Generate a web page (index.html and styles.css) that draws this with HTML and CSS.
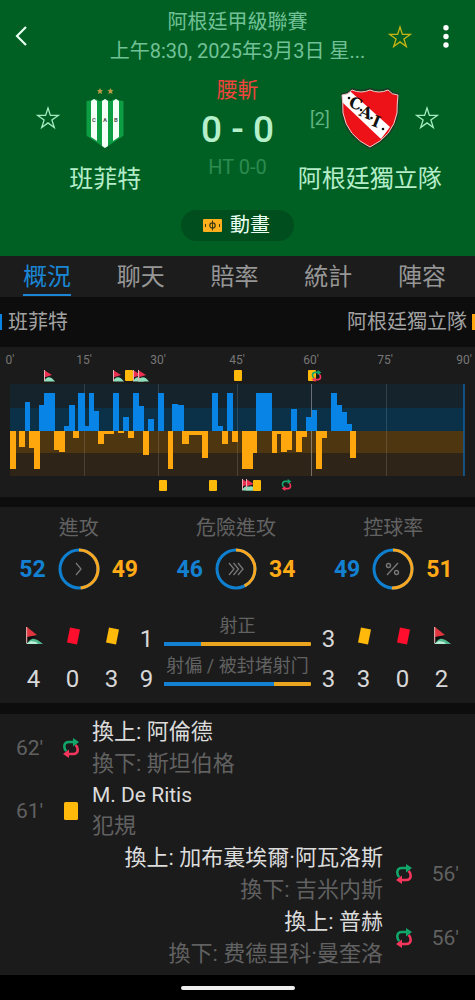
FILE: index.html
```
<!DOCTYPE html>
<html lang="zh-Hant">
<head>
<meta charset="utf-8">
<meta name="viewport" content="width=device-width, initial-scale=1">
<title>班菲特 - 阿根廷獨立隊</title>
<link rel="stylesheet" href="styles.css">
</head>
<body>
<svg class="defs" aria-hidden="true">
  <symbol id="star" viewBox="0 0 24 24"><path d="M12 2l2.4 7.4h7.8l-6.3 4.6 2.4 7.5-6.3-4.6-6.3 4.6 2.4-7.5-6.3-4.6h7.8z" fill="none" stroke="currentColor" stroke-width="1.3"/></symbol>
  <symbol id="corner" viewBox="0 0 18 18"><path d="M1 17c2-1 3-4 6-5 3-1 7 2 11 5z" fill="#52b98d"/><path d="M1 17l5-3 5 1 2 2z" fill="#b9f0d8"/><path d="M3 9l9 1-4 1-5 2z" fill="#0c0c0c"/><path d="M2 0l10 8-10 2z" fill="#e0353f"/><path d="M1 0h1.200v16h-1.200z" fill="#d8a0a0"/></symbol>
  <symbol id="flag" viewBox="0 0 11 12"><path d="M0 11.500c3-6 7-5 11 0z" fill="#8fe0bd"/><path d="M0 0l8 5-8 2.500z" fill="#ee3050"/><path d="M0 0h1v11h-1z" fill="#eab0b8"/></symbol>
  <symbol id="redcard" viewBox="0 0 16 20"><path d="M5 1.500l10 2-3 15-10-2z" fill="#ff0f2d"/></symbol>
  <symbol id="yellowcard" viewBox="0 0 16 20"><path d="M5 1.500l10 2-3 15-10-2z" fill="#ffb90a"/></symbol>
  <symbol id="swap" viewBox="0 0 18 20"><g fill="none" stroke-width="2.6"><path d="M4.500 13Q2.300 11.500 2.300 8.500 2.300 4 7 4h5" stroke="#12a66a"/><path d="M13.500 7q2.200 1.500 2.200 4.500Q15.700 16 11 16H6" stroke="#f5365c"/></g><path d="M11 0l6 4-6 4.500z" fill="#12a66a"/><path d="M7 11.500v8.500l-6-4z" fill="#f5365c"/></symbol>
</svg>

<header class="header">
  <div class="topbar">
    <button class="icon-button" aria-label="返回"><svg width="14" height="22" viewBox="0 0 14 22"><path d="M11 1L2 10l9 9" fill="none" stroke="#e4fff0" stroke-width="2.2"/></svg></button>
    <h1 class="league"><span>阿根廷甲級聯賽</span><span class="date">上午8:30, 2025年3月3日 星...</span></h1>
    <div class="actions">
      <button class="icon-button gold" aria-label="收藏"><svg width="24" height="24"><use href="#star"/></svg></button>
      <button class="icon-button" aria-label="更多"><svg width="6" height="24" viewBox="0 0 6 24"><g fill="#fff"><circle cx="3" cy="2.800" r="2.700"/><circle cx="3" cy="11.500" r="2.700"/><circle cx="3" cy="20" r="2.700"/></g></svg></button>
    </div>
  </div>
  <div class="match">
    <section class="team">
      <div class="crest-row">
        <button class="icon-button mint before" aria-label="收藏班菲特"><svg width="24" height="24"><use href="#star"/></svg></button>
        <svg class="crest" viewBox="0 0 58 68" role="img" aria-label="班菲特隊徽">
          <g fill="#b79a45"><path d="M24 4l1 2h2l-1.500 1.500.5 2.500-2-1-2 1 .5-2.500L21 6h2zM34.500 4l1 2h2l-1.500 1.500.5 2.500-2-1-2 1 .5-2.500L31.500 6h2z"/></g>
          <path d="M10.500 17q4 0 7.500-2 3 0 5 2 3 0 6-2 3 2 6 2 2-2 5-2 3 2 7.500 2v34q0 1-2 2L29 64 12.500 53q-2-1-2-2z" fill="#0d9d43"/>
          <g fill="#f4fff7"><path d="M15 17l3-2 3 2v40l-6-4zM26 17l3-2 3 2v45l-3 2-3-2zM37 17l3-2 3 2v36l-6 4z"/></g>
          <g class="crest-letters"><text x="18" y="38">C</text><text x="29" y="38">A</text><text x="40" y="38">B</text></g>
        </svg>
      </div>
      <h2 class="team-name">班菲特</h2>
    </section>
    <div class="result">
      <span class="status">腰斬</span>
      <strong class="score">0 - 0</strong>
      <span class="half">HT 0-0</span>
    </div>
    <section class="team">
      <div class="crest-row">
        <span class="rank before">[2]</span>
        <svg class="crest" viewBox="0 0 58 68" role="img" aria-label="阿根廷獨立隊隊徽">
          <defs><clipPath id="shield"><path d="M1 11q6 0 10-5 9 4 18 0 9 4 18 0 4 5 10 5-1 9-1 18Q52 52 29 63 6 52 2 29 2 20 1 11z"/></clipPath></defs>
          <g clip-path="url(#shield)"><path d="M0 0h58v68H0z" fill="#ed1118"/><path d="M-2 0h3l9 8 39 35-9 12L-1 16z" fill="#fff"/></g>
          <path d="M0 10q7 0 11-5.500 9 4 18 0 9 4 18 0 4 5.500 11 5.500-1 10-1 19Q53 53 29 64 5 53 1 29 1 20 0 10z" fill="none" stroke="#1c3a25" stroke-width="1.500"/>
          <path d="M1 11q6 0 10-5 9 4 18 0 9 4 18 0 4 5 10 5-1 9-1 18Q52 52 29 63 6 52 2 29 2 20 1 11z" fill="none" stroke="#f7c9c9"/>
          <g fill="#101010"><circle cx="8" cy="14" r="1.300"/><circle cx="20" cy="26" r="1.300"/><circle cx="30.500" cy="34" r="1.300"/><circle cx="42" cy="45" r="1.300"/></g>
          <g class="shield-letters"><text x="14.500" y="25" transform="rotate(22 14.500 20)">C</text><text x="25" y="34" transform="rotate(22 25 29)">A</text><text x="35" y="43" transform="rotate(22 35 38)">I</text></g>
        </svg>
        <button class="icon-button mint after" aria-label="收藏阿根廷獨立隊"><svg width="24" height="24"><use href="#star"/></svg></button>
      </div>
      <h2 class="team-name">阿根廷獨立隊</h2>
    </section>
  </div>
  <button class="animation"><svg width="19" height="13" viewBox="0 0 19 13"><rect width="19" height="13" rx="1" fill="#ffb01c"/><g fill="none" stroke="#3d3a12"><circle cx="9.500" cy="6.500" r="2.700" stroke-width="1.200"/><path d="M9.500 1.500v10M2.500 5v3M16.500 5v3"/></g></svg>動畫</button>
</header>

<nav class="tabs">
  <a class="active" href="#overview" aria-current="page">概況</a><a href="#chat">聊天</a><a href="#odds">賠率</a><a href="#stats">統計</a><a href="#lineup">陣容</a>
</nav>

<main id="overview">
  <div class="legend"><span class="home">班菲特</span><span class="away">阿根廷獨立隊</span></div>

  <svg class="momentum" viewBox="0 0 475 150" role="img" aria-label="比賽走勢">
    <g class="axis"><text x="10" y="17">0'</text><text x="84" y="17">15'</text><text x="158" y="17">30'</text><text x="237" y="17">45'</text><text x="311" y="17">60'</text><text x="385" y="17">75'</text><text x="464" y="17">90'</text></g>
    <path d="M10 37h454v24H10z" fill="#15232c"/><path d="M10 61h454v23H10z" fill="#0b3149"/>
    <path d="M10 84h454v22H10z" fill="#4d3610"/><path d="M10 106h454v23H10z" fill="#2e2518"/>
    <path d="M84.500 37v92M158.500 37v92M237.500 37v92M386.500 37v92" stroke="#fff" stroke-opacity=".13"/>
    <path d="M311.500 37v92" stroke="#fff" stroke-opacity=".35"/>
    <path d="M464 37v92" stroke="#1262a0" stroke-width="1.500"/>
    <path fill="#0883e6" d="M25 84v-29h5v29zM39 84v-26h5v26zM44 84v-38h11v38zM64 84v-5h5v5zM69 84v-26h6v26zM78 84v-38h7v38zM84 84v-5h5v5zM89 84v-38h5v38zM94 84v-20h5v20zM113 84v-38h6v38zM123 84v-14h6v14zM133 84v-38h6v38zM139 84v-25h5v25zM148 84v-12h6v12zM158 84v-38h6v38zM172 84v-27h6v27zM178 84v-26h6v26zM212 84v-38h6v38zM218 84v-5h5v5zM227 84v-38h6v38zM256 84v-38h16v38zM291 84v-22h6v22zM306 84v-14h6v14zM312 84v-21h5v21zM331 84v-38h6v38zM337 84v-26h5v26zM342 84v-19h5v19zM347 84v-7h5v7z"/>
    <path fill="#ffa70d" d="M10 84v38h6v-38zM19 84v16h6v-16zM29 84v17h5v-17zM34 84v38h6v-38zM54 84v19h5v-19zM59 84v21h6v-21zM73 84v7h6v-7zM98 84v13h6v-13zM104 84v3h10v-3zM118 84v2h6v-2zM128 84v7h6v-7zM143 84v24h6v-24zM168 84v38h5v-38zM182 84v13h7v-13zM189 84v4h13v-4zM202 84v27h6v-27zM222 84v13h6v-13zM232 84v11h6v-11zM242 84v38h11v-38zM253 84v22h4v-22zM272 84v22h5v-22zM277 84v3h4v-3zM281 84v21h6v-21zM287 84v19h5v-19zM296 84v21h6v-21zM302 84v6h5v-6zM316 84v38h6v-38zM322 84v7h5v-7zM350 84v27h6v-27z"/>
    <g><use href="#flag" x="44" y="23" width="11" height="12"/><use href="#flag" x="113" y="23" width="11" height="12"/><use href="#flag" x="133" y="23" width="11" height="12"/><use href="#flag" x="138" y="23" width="11" height="12"/><use href="#flag" x="242" y="132" width="11" height="12"/><use href="#flag" x="246" y="132" width="11" height="12"/></g>
    <g fill="#ffb90a"><rect x="125" y="23" width="8" height="11" rx="1"/><rect x="234" y="23" width="8" height="11" rx="1"/><rect x="308" y="23" width="8" height="11" rx="1"/><rect x="159" y="133" width="8" height="11" rx="1"/><rect x="209" y="133" width="8" height="11" rx="1"/><rect x="253" y="133" width="8" height="11" rx="1"/></g>
    <use href="#swap" x="311" y="23" width="11" height="12"/><use href="#swap" x="281" y="132" width="11" height="12"/>
  </svg>

  <section class="stats" id="stats">
    <div class="rings">
      <div class="stat"><h3>進攻</h3><div class="versus"><b class="blue">52</b>
        <svg class="ring" viewBox="0 0 42 42"><g fill="none" stroke-width="3"><circle cx="21" cy="21" r="19" stroke="#0f80d0"/><circle cx="21" cy="21" r="19" stroke="#f9a620" pathLength="101" stroke-dasharray="49 52" transform="rotate(-90 21 21)"/><path d="M18 15l5 6-5 6" stroke="#777" stroke-width="1.300"/></g></svg>
        <b class="orange">49</b></div></div>
      <div class="stat"><h3>危險進攻</h3><div class="versus"><b class="blue">46</b>
        <svg class="ring" viewBox="0 0 42 42"><g fill="none" stroke-width="3"><circle cx="21" cy="21" r="19" stroke="#0f80d0"/><circle cx="21" cy="21" r="19" stroke="#f9a620" pathLength="80" stroke-dasharray="34 46" transform="rotate(-90 21 21)"/><path d="M14 15l5 6-5 6M18.500 15l5 6-5 6M23 15l5 6-5 6" stroke="#777" stroke-width="1.300"/></g></svg>
        <b class="orange">34</b></div></div>
      <div class="stat"><h3>控球率</h3><div class="versus"><b class="blue">49</b>
        <svg class="ring" viewBox="0 0 42 42"><g fill="none" stroke-width="3"><circle cx="21" cy="21" r="19" stroke="#0f80d0"/><circle cx="21" cy="21" r="19" stroke="#f9a620" pathLength="100" stroke-dasharray="51 49" transform="rotate(-90 21 21)"/><g stroke="#777" stroke-width="1.400"><path d="M26 15L15 27"/><circle cx="16.500" cy="17.500" r="2"/><circle cx="24.500" cy="24.500" r="2"/></g></g></svg>
        <b class="orange">51</b></div></div>
    </div>
    <div class="counts">
      <svg class="mark"><use href="#corner"/></svg><svg class="mark"><use href="#redcard"/></svg><svg class="mark"><use href="#yellowcard"/></svg>
      <span>1</span>
      <div class="shots"><h4>射正</h4><div class="bar"><i style="width:25%"></i></div></div>
      <span>3</span>
      <svg class="mark"><use href="#yellowcard"/></svg><svg class="mark"><use href="#redcard"/></svg><svg class="mark"><use href="#corner"/></svg>
      <span>4</span><span>0</span><span>3</span><span>9</span>
      <div class="shots"><h4>射偏 / 被封堵射门</h4><div class="bar"><i style="width:75%"></i></div></div>
      <span>3</span><span>3</span><span>0</span><span>2</span>
    </div>
  </section>

  <ol class="events">
    <li><time>62'</time><svg class="event-icon"><use href="#swap"/></svg><div><p class="primary">換上: 阿倫德</p><p>換下: 斯坦伯格</p></div></li>
    <li><time>61'</time><svg class="event-icon" viewBox="0 0 18 20"><rect x="2" y="1" width="14" height="18" rx="1.500" fill="#ffb90a"/></svg><div><p class="primary latin">M. De Ritis</p><p>犯規</p></div></li>
    <li class="right"><time>56'</time><svg class="event-icon"><use href="#swap"/></svg><div><p class="primary">換上: 加布裏埃爾·阿瓦洛斯</p><p>換下: 吉米内斯</p></div></li>
    <li class="right"><time>56'</time><svg class="event-icon"><use href="#swap"/></svg><div><p class="primary">換上: 普赫</p><p>換下: 费德里科·曼奎洛</p></div></li>
  </ol>
</main>
<footer class="home-indicator"><span></span></footer>
</body>
</html>
```

FILE: styles.css
```
* { box-sizing: border-box; }
body, h1, h2, h3, h4, p, ol { margin: 0; padding: 0; font-weight: 400; }
body {
  min-height: 100vh;
  display: flex;
  flex-direction: column;
  background: #000;
  color: #d8d8d8;
  font-family: Roboto, "Noto Sans CJK TC", "Noto Sans CJK SC", sans-serif;
}
svg { display: block; }
.defs { position: absolute; width: 0; height: 0; }
button { border: 0; background: none; color: inherit; font: inherit; cursor: pointer; }

.header { background: #006024; padding: 8px 0 15px; }
.topbar {
  display: grid;
  grid-template-columns: 96px minmax(0, 1fr) 96px;
  align-items: center;
  padding: 0 15px;
}
.icon-button { padding: 0; justify-self: start; }
.gold { color: #c9b413; }
.mint { color: #a5ecc0; }
.league { display: flex; flex-direction: column; align-items: center; font-size: 20px; line-height: 29px; color: #72c196; }
.date { white-space: nowrap; }
.actions { display: flex; justify-content: flex-end; gap: 31px; padding-right: 11px; }

.match { display: grid; grid-template-columns: minmax(0, 1fr) 54px minmax(0, 1fr); }
.team { padding-top: 18px; }
.crest-row { display: grid; grid-template-columns: 1fr 58px 1fr; align-items: center; }
.crest { width: 58px; height: 68px; }
.before { justify-self: end; margin-right: 16px; }
.after { justify-self: start; margin-left: 16px; }
.rank { margin-right: 11px; font-size: 18px; color: #61b583; }
.crest-letters { font: 700 6px Roboto, sans-serif; text-anchor: middle; fill: #555; }
.shield-letters { font: 900 16px "DejaVu Serif", serif; text-anchor: middle; fill: #101010; }
.team-name { margin-top: 12px; font-size: 24px; line-height: 30px; text-align: center; color: #b5edc9; }
.result { display: flex; flex-direction: column; align-items: center; padding-top: 10px; white-space: nowrap; }
.status { font-size: 21px; line-height: 28px; color: #f0443c; }
.score { margin-top: 2px; font-size: 37px; font-weight: 500; line-height: 48px; color: #b5f0cb; }
.half { font-size: 20px; line-height: 26px; color: #2d8b50; }
.animation {
  display: flex;
  align-items: center;
  gap: 8px;
  margin: 16px auto 0;
  padding: 0 24px 0 22px;
  border-radius: 16px;
  background: #004e1d;
  color: #e9fff1;
  font-size: 20px;
  line-height: 31px;
}

.tabs { display: flex; justify-content: space-around; padding: 0 6px 1px 0; background: #1c1c1c; }
.tabs a { padding-top: 4px; border-bottom: 2px solid transparent; font-size: 24px; line-height: 34px; text-decoration: none; color: #969696; }
.tabs .active { color: #1a86d5; border-color: #1a86d5; }

.legend { display: flex; justify-content: space-between; align-items: center; height: 50px; background: #0d0d0d; color: #a2a2a2; font-size: 20px; line-height: 16px; }
.home { border-left: 2px solid #0883e6; padding-left: 6px; }
.away { border-right: 3px solid #ffa70d; padding-right: 5px; }
.momentum { width: 100%; background: #1b1b1b; }
.axis { font-size: 12px; text-anchor: middle; fill: #777; }

.stats { margin-top: 10px; padding-bottom: 9px; background: #1b1b1b; }
main { background: #0d0d0d; }
.rings { display: grid; grid-template-columns: repeat(3, 1fr); padding: 6px 3px 0 0; }
.stat h3 { font-size: 20px; line-height: 30px; text-align: center; color: #626262; }
.versus { display: flex; justify-content: center; align-items: center; gap: 12px; margin-top: 5px; font-size: 23px; }
.ring { width: 42px; height: 42px; }
.blue { color: #1480d2; }
.orange { color: #ffaa16; }
.counts {
  display: grid;
  grid-template-columns: repeat(3, 39px) 31px minmax(0, 1fr) 31px repeat(3, 39px);
  grid-auto-rows: 40px;
  margin-top: 24px;
  padding: 0 14px;
  text-align: center;
  font-size: 24px;
}
.counts > span { padding-top: 10px; line-height: 30px; }
.mark { width: 18px; height: 20px; margin-top: 12px; justify-self: center; }
.shots { padding: 0 2px; }
.shots h4 { font-size: 18px; line-height: 24px; white-space: nowrap; color: #626262; }
.bar { height: 4px; margin-top: 4px; border-radius: 1px; background: #eba51f; }
.bar i { display: block; height: 4px; background: #1480d2; }

.events { margin-top: 11px; padding: 2px 16px 5px; list-style: none; background: #1b1b1b; font-size: 22px; line-height: 32px; color: #616161; }
.events li { display: flex; align-items: center; }
.events .right { flex-direction: row-reverse; text-align: right; }
.events time { width: 46px; font-size: 21px; }
.event-icon { width: 18px; height: 20px; margin-right: 12px; }
.right .event-icon { margin: 0 0 0 12px; }
.events .primary { color: #dcdcdc; }
.events .latin { font-size: 21px; line-height: 30px; }

.home-indicator { flex: 1; display: flex; align-items: center; justify-content: center; min-height: 25px; background: #000; }
.home-indicator span { width: 24%; height: 4px; border-radius: 2px; background: #eee; }
```
